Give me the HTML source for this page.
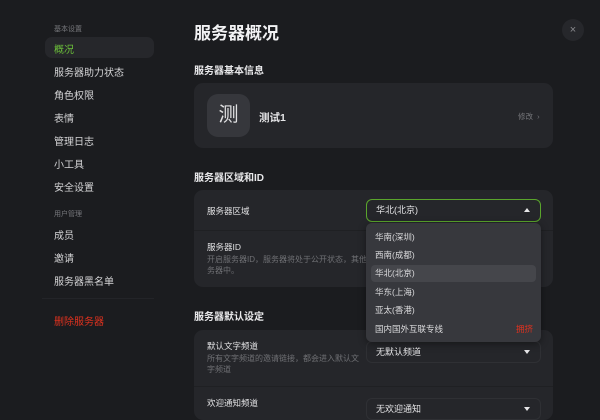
<!DOCTYPE html>
<html><head><meta charset="utf-8"><style>
*{margin:0;padding:0;box-sizing:border-box}
body{width:600px;height:411px;overflow:hidden;background:#1b1c1f;font-family:"Liberation Sans","Noto Sans CJK SC",sans-serif;color:#e6e6e8;position:relative}
.a{position:absolute;white-space:nowrap}
.side{font-size:10px;color:#d4d4d6}
.grp{font-size:7px;color:#77787c}
.h{font-size:10px;font-weight:bold;color:#e8e8ea}
.card{position:absolute;background:#25262a;border-radius:9px}
.sel{position:absolute;border:1px solid #2f3034;border-radius:6px;font-size:9px;color:#e6e6e8;padding-left:9px}
.desc{font-size:8px;color:#6f7074;line-height:11px}
.tri{position:absolute;right:10px;width:0;height:0;border-left:3.5px solid transparent;border-right:3.5px solid transparent}
.opt{position:absolute;left:9px;font-size:8.5px;color:#dcdcde}
</style></head><body>
<div class="a grp" style="left:54px;top:24px">基本设置</div>
<div class="a" style="left:45px;top:37px;width:109px;height:21px;background:#26272b;border-radius:7px"></div>
<div class="a side" style="left:54px;top:41px;color:#6cc13a">概况</div>
<div class="a side" style="left:54px;top:64px">服务器助力状态</div>
<div class="a side" style="left:54px;top:87px">角色权限</div>
<div class="a side" style="left:54px;top:110px">表情</div>
<div class="a side" style="left:54px;top:133px">管理日志</div>
<div class="a side" style="left:54px;top:156px">小工具</div>
<div class="a side" style="left:54px;top:179px">安全设置</div>
<div class="a grp" style="left:54px;top:209px">用户管理</div>
<div class="a side" style="left:54px;top:227px">成员</div>
<div class="a side" style="left:54px;top:250px">邀请</div>
<div class="a side" style="left:54px;top:273px">服务器黑名单</div>
<div class="a" style="left:42px;top:298px;width:112px;height:1px;background:#232428"></div>
<div class="a side" style="left:54px;top:313px;color:#e0321f">删除服务器</div>

<div class="a" style="left:194px;top:19px;font-size:17px;font-weight:bold;color:#f2f2f4">服务器概况</div>
<div class="a" style="left:562px;top:19px;width:22px;height:22px;border-radius:50%;background:#26272b;color:#8a8b8f;font-size:11px;text-align:center;line-height:22px">×</div>

<div class="a h" style="left:194px;top:62px">服务器基本信息</div>
<div class="card" style="left:194px;top:83px;width:359px;height:65px"></div>
<div class="a" style="left:207px;top:94px;width:43px;height:43px;border-radius:11px;background:#36373c;color:#e0e0e2;font-size:20px;text-align:center;line-height:43px">测</div>
<div class="a" style="left:259px;top:110px;font-size:10.5px;font-weight:bold">测试1</div>
<div class="a" style="left:518px;top:111px;font-size:7.5px;color:#76777b">修改 &nbsp;›</div>

<div class="a h" style="left:194px;top:169px">服务器区域和ID</div>
<div class="card" style="left:194px;top:190px;width:359px;height:97px"></div>
<div class="a" style="left:194px;top:230px;width:359px;height:1px;background:#1f2023"></div>
<div class="a" style="left:207px;top:205px;font-size:8.5px;color:#e0e0e2">服务器区域</div>
<div class="a" style="left:207px;top:241px;font-size:8.5px;color:#e0e0e2">服务器ID</div>
<div class="a desc" style="left:207px;top:254px">开启服务器ID，服务器将处于公开状态，其他用<br>务器中。</div>
<div class="sel" style="left:366px;top:199px;width:175px;height:23px;border:1.5px solid #5aa52c;line-height:20px">华北(北京)<div class="tri" style="top:8px;border-bottom:4px solid #e6e6e8"></div></div>

<div class="a h" style="left:194px;top:308px">服务器默认设定</div>
<div class="card" style="left:194px;top:330px;width:359px;height:90px"></div>
<div class="a" style="left:194px;top:386px;width:359px;height:1px;background:#1f2023"></div>
<div class="a" style="left:207px;top:340px;font-size:8.5px;color:#e0e0e2">默认文字频道</div>
<div class="a desc" style="left:207px;top:353px">所有文字频道的邀请链接，都会进入默认文<br>字频道</div>
<div class="sel" style="left:366px;top:341px;width:175px;height:22px;line-height:20px">无默认频道<div class="tri" style="top:8px;border-top:4px solid #e6e6e8"></div></div>
<div class="a" style="left:207px;top:397px;font-size:8.5px;color:#e0e0e2">欢迎通知频道</div>
<div class="sel" style="left:366px;top:398px;width:175px;height:22px;line-height:20px">无欢迎通知<div class="tri" style="top:8px;border-top:4px solid #e6e6e8"></div></div>

<div class="a" style="left:366px;top:223px;width:175px;height:119px;background:#37383d;border-radius:6px;box-shadow:0 2px 8px rgba(0,0,0,.4)">
<div class="a" style="left:5px;top:42px;width:165px;height:17px;background:#45464b;border-radius:4px"></div>
<div class="opt" style="top:8px">华南(深圳)</div>
<div class="opt" style="top:26px">西南(成都)</div>
<div class="opt" style="top:44px">华北(北京)</div>
<div class="opt" style="top:63px">华东(上海)</div>
<div class="opt" style="top:81px">亚太(香港)</div>
<div class="opt" style="top:100px">国内国外互联专线</div>
<div class="opt" style="top:100px;left:150px;color:#e0321f">拥挤</div>
</div>
</body></html>
